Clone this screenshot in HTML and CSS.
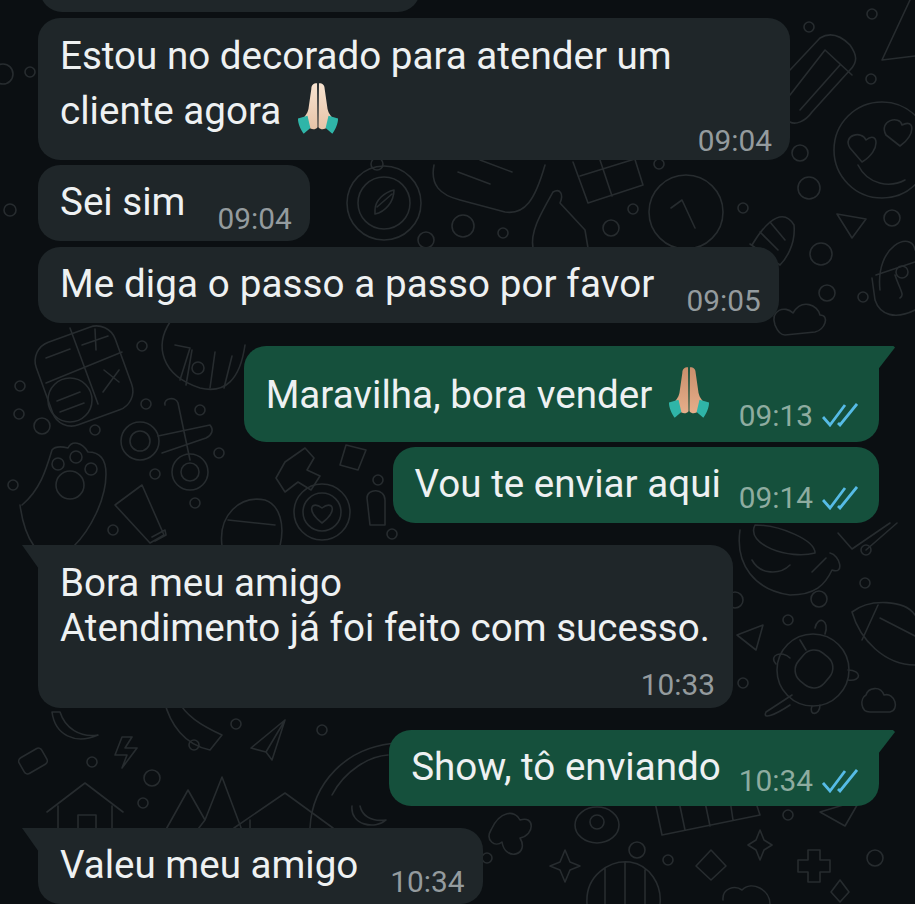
FILE: index.html
```html
<!DOCTYPE html>
<html lang="pt-BR">
<head>
  <meta charset="UTF-8" />
  <meta name="viewport" content="width=device-width, initial-scale=1" />
  <title>Conversa</title>
  <link rel="stylesheet" href="styles.css">
</head>
<body>

  <main class="screen">

    <!-- wallpaper doodles -->
    <svg class="wallpaper" viewBox="0 0 915 904" aria-hidden="true">
      <!-- calculator -->
      <rect x="42" y="332" width="84" height="88" rx="20" transform="rotate(-20 84 376)"/>
      <path d="M70 328 L98 404 M46 383 L122 352 M46 358 L70 349 M82 345 L108 336 M95 329 L96 350 M104 370 L119 382 M103 392 L119 370"/>
      <circle cx="70" cy="400" r="22"/>
      <path d="M57 401 L80 392 M60 412 L84 403"/>
      <!-- scissors -->
      <circle cx="140" cy="441" r="19"/><circle cx="140" cy="441" r="10"/>
      <path d="M158 436 L210 425 C214 430 212 435 206 438 L162 453 M165 405 C163 398 176 396 178 403 L190 460"/>
      <circle cx="190" cy="472" r="18"/><circle cx="190" cy="472" r="9"/>
      <!-- paw -->
      <path d="M22 505 C40 490 46 470 52 450 C56 445 64 447 68 448 C72 440 82 442 88 452 C100 452 106 460 106 474 C106 500 90 530 74 546 M20 505 C22 520 26 535 34 546"/>
      <circle cx="70" cy="485" r="14"/><circle cx="58" cy="464" r="6"/><circle cx="76" cy="457" r="6"/><circle cx="91" cy="469" r="6"/>
      <!-- tube -->
      <path d="M115 505 L142 485 L164 535 L150 543 Z M152 537 L165 530 L166 535 L155 541"/>
      <!-- easter egg -->
      <path d="M170 322 C155 345 160 375 200 388 C225 394 240 380 245 345"/>
      <path d="M175 345 L190 348 L180 380 M192 350 L186 385 M215 352 L210 388 M232 356 L224 388"/>
      <circle cx="198" cy="368" r="6"/>
      <!-- pencil -->
      <path d="M790 70 L820 38 C830 32 840 35 850 45 C857 55 858 62 850 70 L812 112 C805 122 795 125 790 122 M790 95 L825 50 L852 75 M800 110 L840 65"/>
      <!-- smiley hearts -->
      <circle cx="882" cy="150" r="48"/>
      <path d="M858 165 C868 185 890 188 905 180 M850 148 C842 135 862 130 866 140 C878 130 882 150 862 162 Z M886 135 C878 120 900 115 902 125 C915 118 916 135 900 146 Z"/>
      <path d="M882 60 L910 0 M882 60 L915 56"/>
      <!-- lock, cloud, misc right -->
      <path d="M880 290 C875 245 912 230 915 250 M876 275 L915 262 M915 310 C895 320 880 315 875 300 L872 278 M895 275 C900 290 905 295 900 298"/>
      <circle cx="902" cy="272" r="6"/>
      <path d="M775 325 C770 310 785 305 793 313 C802 298 818 305 820 315 C830 315 825 330 815 332 L785 335 C780 335 777 330 775 325 Z"/>
      <path d="M837 214 L866 219 L852 238 Z"/>
      <path d="M752 245 C770 215 785 210 794 225 C796 245 785 260 780 265 M750 244 L780 265 M770 222 L785 240 M760 232 L778 250"/>
      <!-- compass -->
      <circle cx="384" cy="203" r="37"/><circle cx="384" cy="203" r="26"/>
      <path d="M375 210 C375 200 385 192 394 190 C394 202 385 212 375 214 Z M377 207 L392 194"/>
      <circle cx="377" cy="164" r="6"/>
      <!-- gift, bag, clock, thumb -->
      <path d="M573 162 L588 203 L643 185 L632 150 M580 176 L638 158 M600 160 L612 196"/>
      <circle cx="686" cy="212" r="37"/>
      <path d="M671 208 L682 200 L695 228"/>
      <path d="M533 248 C530 232 540 215 553 192 C560 188 564 194 560 203 L585 230 L588 248"/>
      <path d="M434 165 C430 185 440 195 460 200 L505 212 C525 215 535 200 545 165"/>
      <path d="M458 172 L490 184 M480 160 L512 172"/>
      <!-- cup, check, football, turtle -->
      <path d="M740 530 C735 565 755 590 790 595 C815 595 825 585 832 570 C845 575 840 555 830 553 M755 525 C780 525 815 540 815 553 C790 560 745 545 755 525 Z"/>
      <path d="M752 560 C760 575 780 575 790 565 M812 572 L826 558"/>
      <path d="M838 533 L852 549 L890 523 M866 550 L897 523"/>
      <path d="M852 612 C870 598 905 600 915 615 M852 612 C860 640 885 665 915 665 M878 605 L862 640 M880 618 L915 636"/>
      <circle cx="813" cy="670" r="36"/>
      <rect x="797" y="651" width="34" height="36" rx="14" transform="rotate(40 814 669)"/>
      <path d="M800 640 L806 650 M776 664 C768 655 782 650 790 658 M848 670 C862 670 862 682 848 680 M815 628 C818 615 830 620 825 634 M792 695 L766 712 C762 720 775 715 790 705 M812 706 C808 716 820 716 820 705"/>
      <path d="M737 635 L763 625 L756 650 Z"/>
      <path d="M866 695 C868 688 880 685 884 695 C895 692 900 710 890 712 L870 712 C860 712 860 698 866 695 Z"/>
      <!-- bottom left -->
      <path d="M52 712 C55 735 75 745 98 735 C80 738 65 728 60 712 Z"/>
      <rect x="20" y="752" width="26" height="18" rx="4" transform="rotate(-30 33 761)"/>
      <path d="M122 737 L115 755 L127 755 L122 768 L137 748 L125 748 L132 737 Z"/>
      <path d="M164 700 C170 725 185 745 210 750 L222 735 C200 725 185 715 178 700"/>
      <path d="M285 720 L251 748 L266 752 L272 760 Z M266 752 L285 720"/>
      <path d="M47 812 L85 783 L123 812 M58 806 L58 833 M112 806 L112 833 M78 833 L78 815 L96 815 L96 833"/>
      <path d="M164 833 L188 790 L205 820 L222 777 L243 833 M205 820 L195 833"/>
      <path d="M234 828 L285 793 L333 828 M250 820 L250 830"/>
      <path d="M310 828 C312 785 345 745 400 743 M332 795 C345 770 370 756 388 755 M352 806 C350 825 375 830 386 820 C370 822 362 815 360 806"/>
      <!-- bottom right -->
      <path d="M491 830 C500 810 515 810 520 820 C535 815 535 835 520 838 C530 855 505 862 502 842 C495 848 485 840 491 830 Z"/>
      <ellipse cx="597" cy="825" rx="22" ry="18"/><circle cx="597" cy="822" r="7"/>
      <path d="M655 802 L662 835 L760 815 L755 800 M680 806 L685 830 M705 802 L710 826 M730 800 L733 820"/>
      <path d="M820 812 L860 800 L845 826 Z"/>
      <path d="M565 850 L570 862 L580 866 L570 870 L565 882 L560 870 L550 866 L560 862 Z"/>
      <path d="M587 904 C585 875 610 860 630 862 C650 865 662 885 660 904 M605 868 L605 904 M625 862 L625 904 M645 870 L645 904"/>
      <path d="M711 850 L726 866 L711 880 L696 866 Z"/>
      <path d="M760 830 L764 840 L772 845 L764 850 L760 860 L756 850 L748 845 L756 840 Z"/>
      <path d="M808 850 L820 850 L820 860 L830 860 L830 872 L820 872 L820 882 L808 882 L808 872 L798 872 L798 860 L808 860 Z"/>
      <path d="M723 900 C722 888 735 885 742 890 C752 880 770 890 770 904"/>
      <path d="M840 880 L849 892 L840 902 L831 892 Z"/>
      <circle cx="10" cy="210" r="6"/><circle cx="30" cy="72" r="5"/><circle cx="3" cy="74" r="10"/>
      <circle cx="142" cy="346" r="5"/><circle cx="20" cy="386" r="5"/><circle cx="19" cy="414" r="5"/>
      <circle cx="42" cy="426" r="8"/><circle cx="95" cy="430" r="5"/><circle cx="146" cy="404" r="5"/>
      <circle cx="200" cy="410" r="5"/><circle cx="219" cy="453" r="5"/><circle cx="155" cy="474" r="5"/>
      <circle cx="195" cy="503" r="5"/><circle cx="113" cy="530" r="5"/><circle cx="13" cy="485" r="5"/>
      <circle cx="463" cy="226" r="11"/><circle cx="503" cy="233" r="5"/><circle cx="426" cy="240" r="8"/>
      <circle cx="611" cy="228" r="8"/><circle cx="633" cy="209" r="5"/><circle cx="659" cy="164" r="5"/>
      <circle cx="809" cy="27" r="5"/><circle cx="872" cy="14" r="5"/><circle cx="871" cy="79" r="5"/>
      <circle cx="800" cy="153" r="8"/><circle cx="809" cy="188" r="11"/><circle cx="743" cy="208" r="5"/>
      <circle cx="821" cy="254" r="11"/><circle cx="827" cy="293" r="8"/><circle cx="863" cy="297" r="5"/>
      <circle cx="892" cy="218" r="8"/><circle cx="819" cy="599" r="8"/><circle cx="788" cy="620" r="5"/>
      <circle cx="743" cy="683" r="5"/><circle cx="866" cy="550" r="5"/><circle cx="865" cy="583" r="5"/>
      <circle cx="735" cy="600" r="8"/><circle cx="378" cy="480" r="5"/><circle cx="392" cy="534" r="5"/>
      <circle cx="236" cy="724" r="5"/><circle cx="92" cy="762" r="5"/><circle cx="152" cy="778" r="8"/>
      <circle cx="194" cy="745" r="5"/><circle cx="143" cy="803" r="5"/><circle cx="322" cy="730" r="5"/>
      <circle cx="788" cy="815" r="5"/><circle cx="637" cy="850" r="8"/><circle cx="668" cy="860" r="5"/>
      <circle cx="875" cy="858" r="8"/><circle cx="487" cy="858" r="5"/>
      <!-- heart circle, glasses, cross, lock -->
      <circle cx="322" cy="512" r="28"/><circle cx="322" cy="512" r="19"/>
      <path d="M322 523 C305 510 312 500 322 508 C332 500 339 510 322 523 Z"/>
      <path d="M222 546 C218 515 240 495 265 500 C280 505 285 525 280 546 M228 520 L275 525"/>
      <path d="M346 445 L366 450 L358 470 L340 465 Z M285 462 L305 448 L314 458 L307 470 L320 476 L311 490 L298 482 L285 492 L276 478 Z M367 498 C367 488 385 488 385 500 L385 525 L370 525 Z"/>
    </svg>

    <section class="chat">
      <div class="bubble in row partial">
        <p class="text">&nbsp;</p>
        <span class="meta">09:04</span>
      </div>

      <div class="bubble in block first-wide">
        <p class="text">Estou no decorado para atender um<br>cliente agora <svg class="emoji" viewBox="0 0 44 56"><defs><linearGradient id="lightSkin" x1="0" y1="0" x2="0" y2="1"><stop offset="0" stop-color="#f7e3d0"/><stop offset="1" stop-color="#e8c4a8"/></linearGradient></defs><path fill="url(#lightSkin)" d="M21 1C17 1 15 3 15 7L12 28C11 33 8 36 6 38L11 46C15 50 19 50 21.5 47Z"/><path fill="url(#lightSkin)" d="M23 1C27 1 29 3 29 7L32 28C33 33 36 36 38 38L33 46C29 50 25 50 22.5 47Z"/><path fill="#2fb5a8" d="M1 38L11 35L14 48L7 54C4 50 1 44 1 38ZM43 38L33 35L30 48L37 54C40 50 43 44 43 38Z"/></svg></p>
        <span class="meta">09:04</span>
      </div>

      <div class="bubble in row">
        <p class="text">Sei sim</p>
        <span class="meta">09:04</span>
      </div>

      <div class="bubble in row">
        <p class="text wider">Me diga o passo a passo por favor</p>
        <span class="meta">09:05</span>
      </div>

      <div class="bubble out row tail group tall">
        <p class="text">Maravilha, bora vender <svg class="emoji" viewBox="0 0 44 56"><defs><linearGradient id="tanSkin" x1="0" y1="0" x2="0" y2="1"><stop offset="0" stop-color="#c98f6c"/><stop offset="1" stop-color="#e6ae8a"/></linearGradient></defs><path fill="url(#tanSkin)" d="M21 1C17 1 15 3 15 7L12 28C11 33 8 36 6 38L11 46C15 50 19 50 21.5 47Z"/><path fill="url(#tanSkin)" d="M23 1C27 1 29 3 29 7L32 28C33 33 36 36 38 38L33 46C29 50 25 50 22.5 47Z"/><path fill="#2fb5a8" d="M1 38L11 35L14 48L7 54C4 50 1 44 1 38ZM43 38L33 35L30 48L37 54C40 50 43 44 43 38Z"/></svg></p>
        <span class="meta">09:13 <svg class="ticks" viewBox="0 0 36 24"><path d="M1 14L8 22L23 2M16 20L18 22L35 1"/></svg></span>
      </div>

      <div class="bubble out row">
        <p class="text">Vou te enviar aqui</p>
        <span class="meta">09:14 <svg class="ticks" viewBox="0 0 36 24"><path d="M1 14L8 22L23 2M16 20L18 22L35 1"/></svg></span>
      </div>

      <div class="bubble in block tail group second-wide">
        <p class="text">Bora meu amigo<br>Atendimento já foi feito com sucesso.</p>
        <span class="meta">10:33</span>
      </div>

      <div class="bubble out row tail group">
        <p class="text">Show, tô enviando</p>
        <span class="meta">10:34 <svg class="ticks" viewBox="0 0 36 24"><path d="M1 14L8 22L23 2M16 20L18 22L35 1"/></svg></span>
      </div>

      <div class="bubble in row tail group">
        <p class="text">Valeu meu amigo</p>
        <span class="meta">10:34</span>
      </div>
    </section>
  </main>

</body>
</html>
```

FILE: styles.css
```css
:root {
  --bg-color: #0b0f12;
  --doodle-color: #272c2f;
  --in-bg: #1f2629;
  --out-bg: #15503c;
  --text-color: #eef1f2;
  --in-meta: #949b9e;
  --out-meta: #8eaca0;
  --tick-color: #56bbe6;
  --font-stack: Roboto, "Noto Sans", sans-serif;
}

* {
  margin: 0;
  padding: 0;
  box-sizing: border-box;
}

html, body {
  height: 100%;
}

body {
  font-family: var(--font-stack);
  background-color: var(--bg-color);
  color: var(--text-color);
}

.screen {
  position: relative;
  height: 904px;
  overflow: hidden;
}

.wallpaper {
  position: absolute;
  top: 0;
  left: 0;
  width: 915px;
  height: 904px;
  fill: none;
  stroke: var(--doodle-color);
  stroke-width: 1.6;
  stroke-linecap: round;
  stroke-linejoin: round;
}

.chat {
  position: relative;
  display: flex;
  flex-direction: column;
  gap: 5.5px;
  padding: 0 36px 0 38px;
}

.bubble {
  position: relative;
  padding: 14px 18px 8px 22px;
  border-radius: 22px;
  font-size: 38.6px;
  line-height: 45px;
}

.bubble.in {
  align-self: flex-start;
  background-color: var(--in-bg);
}

.bubble.out {
  align-self: flex-end;
  padding-right: 21px;
  padding-bottom: 11px;
  background-color: var(--out-bg);
}

.bubble.row {
  display: flex;
  align-items: flex-end;
}

.bubble.row .text {
  margin-bottom: 9px;
}

.bubble.out.row .text {
  margin-bottom: 6px;
}

.bubble.block {
  display: flex;
  flex-direction: column;
  padding-top: 15px;
  padding-bottom: 9px;
}

.bubble.block .meta {
  align-self: flex-end;
  margin-top: 20px;
}

.partial {
  width: 380px;
  height: 60px;
  margin-top: -48px;
  margin-left: 2px;
  justify-content: flex-end;
}

.first-wide {
  width: 752px;
  height: 142px;
}

.bubble.first-wide .meta {
  margin-top: -10px;
}

.bubble.first-wide .emoji {
  margin-top: 4px;
}

.second-wide {
  width: 695px;
}

.group {
  margin-top: 16.5px;
}

.bubble.out.row.tall {
  margin-top: 17.5px;
  padding-top: 20px;
  padding-bottom: 12px;
}

.bubble.out.row.tall .text {
  margin-bottom: 10px;
}

.text {
  white-space: nowrap;
}

.wider {
  letter-spacing: 0.1px;
}

.emoji {
  width: 42px;
  height: 54px;
  margin-left: 6px;
  vertical-align: -12px;
}

.bubble.out .emoji {
  margin-left: 6px;
  margin-right: 11px;
}

.meta {
  display: flex;
  align-items: center;
  flex-shrink: 0;
  gap: 9px;
  font-size: 29.8px;
  line-height: 29px;
  margin-left: 32px;
  color: var(--in-meta);
}

.bubble.out .meta {
  margin-left: 18px;
  color: var(--out-meta);
}

.ticks {
  width: 36px;
  height: 24px;
  fill: none;
  stroke: var(--tick-color);
  stroke-width: 2.8;
}

/* little tail on the first bubble of a group */
.tail {
  border-top-left-radius: 0;
}

.bubble.out.tail {
  border-top-left-radius: 22px;
  border-top-right-radius: 0;
}

.tail::before {
  content: "";
  position: absolute;
  top: 0;
  left: -16px;
  width: 17px;
  height: 24px;
  background-color: var(--in-bg);
  clip-path: polygon(0 0, 100% 0, 100% 100%);
}

.bubble.out.tail::before {
  left: auto;
  right: -16px;
  background-color: var(--out-bg);
  clip-path: polygon(0 0, 88% 0, 100% 8%, 0 100%);
}
```
